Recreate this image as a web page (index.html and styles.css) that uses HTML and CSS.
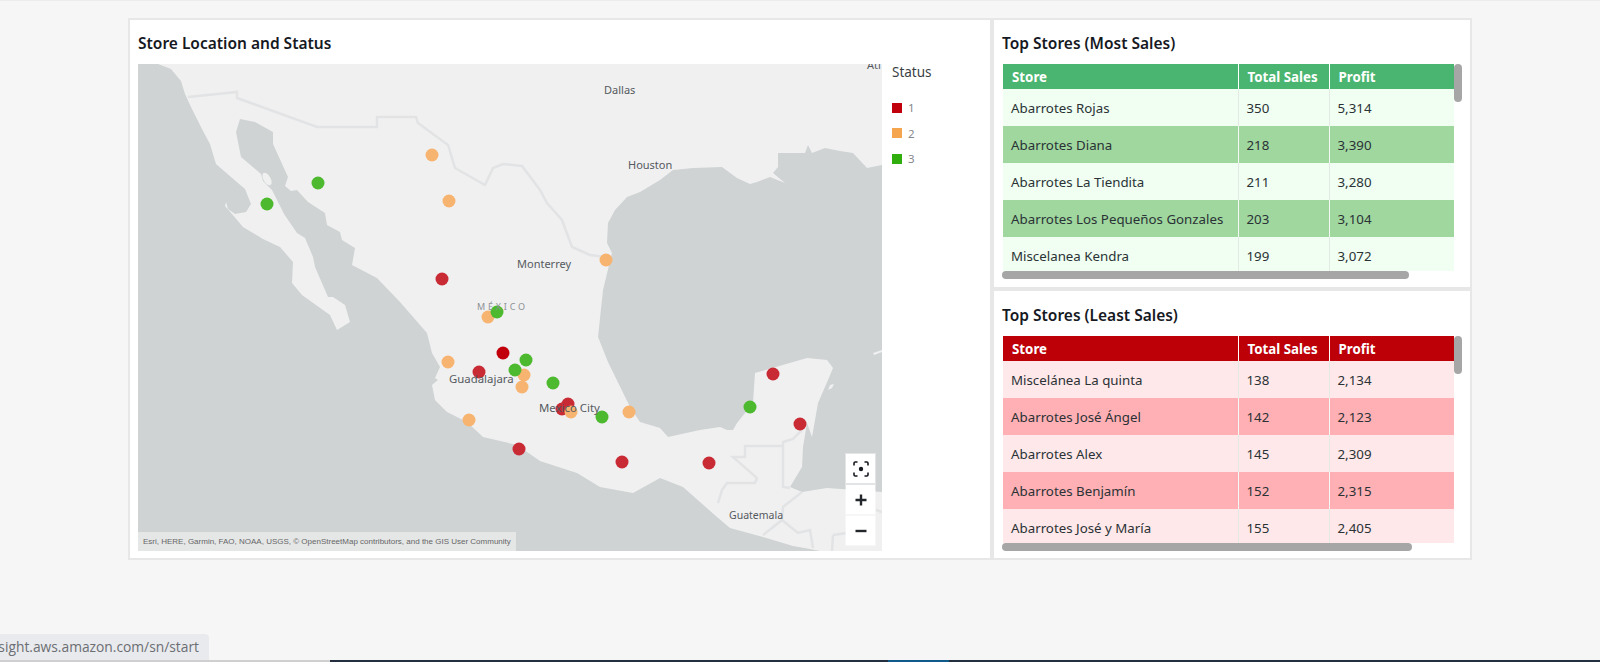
FILE: index.html
```html
<!DOCTYPE html>
<html lang="en">
<head>
  <meta charset="UTF-8" />
  <title>Store dashboard</title>
  <link rel="stylesheet" href="styles.css">
</head>
<body>
  <div class="page">
    <main class="dashboard">

      <section class="panel panel-map">
        <h2 class="panel-title">Store Location and Status</h2>
        <div class="map-row">
          <div class="map">
            <svg class="map-svg" viewBox="138 64 744 487" width="744" height="487">
              <rect class="land" x="138" y="64" width="744" height="487" />
              <path class="water" d="M138 64 L158 64 171 69 181 81 185 94 191 107 203 131 210 144 216 164 231 177 245 189 251 204 246 212 235 214 228 209 226 202 225 206 232 214 243 227 263 239 280 247 293 262 292 283 302 295 330 315 337 330 350 322 345 305 333 297 328 297 315 267 313 257 305 238 297 233 284 214 272 190 263 181 261 174 241 157 236 132 240 119 255 122 273 132 273 144 288 177 285 186 291 191 297 190 308 202 325 213 327 225 340 232 342 240 355 248 352 265 377 278 400 302 427 333 432 353 440 367 435 378 438 380 432 385 435 400 447 412 467 422 483 437 517 445 540 461 577 473 600 487 633 493 660 478 683 487 700 502 717 517 730 528 763 537 793 546 810 549 820 551 138 551 Z" />
              <path class="water" d="M882 165 L867 168 853 153 840 151 825 148 812 153 808 145 805 153 778 153 778 167 773 173 785 183 770 177 757 182 750 184 737 178 722 167 693 168 673 170 660 180 640 192 627 197 615 210 608 223 607 243 612 253 603 290 598 337 608 362 630 407 640 422 660 428 668 437 700 430 720 427 727 430 733 430 737 423 753 403 755 373 807 358 827 360 833 368 828 380 818 403 812 437 807 423 803 447 802 467 790 487 802 492 827 488 882 492 Z" />
              <path class="island" d="M828 390 L830 385 834 384 832 388 Z" />
              <path class="island" d="M873 353 L882 350 882 352 874 355 Z" />
              <ellipse class="island" cx="267" cy="179" rx="3.5" ry="7" transform="rotate(-30 267 179)" />
              <path class="border" d="M188 97 L237 92 237 98 317 127 377 127 377 117 416 117 418 123 448 145 455 168 485 185 493 168 503 164 522 166 540 190 547 203 562 220 572 247 590 255 605 257" />
              <path class="border" d="M718 503 L722 490 727 483 755 483 757 478 733 457 745 457 745 446 783 446 783 487 790 488 M783 446 L783 442 793 439 802 430 M802 492 L783 507 782 520 763 535 M782 520 L798 533 810 530 813 548 M833 535 L847 533 M833 535 L832 551 M882 512 L876 510" />

              <text class="city" x="604" y="94">Dallas</text>
              <text class="city" x="628" y="169">Houston</text>
              <text class="city" x="867" y="69">Atl</text>

              <circle class="dot orange" cx="432" cy="155" r="6.5" />
              <circle class="dot green" cx="318" cy="183" r="6.5" />
              <circle class="dot green" cx="267" cy="204" r="6.5" />
              <circle class="dot orange" cx="449" cy="201" r="6.5" />
              <circle class="dot red" cx="442" cy="279" r="6.5" />
              <circle class="dot orange" cx="606" cy="260" r="6.5" />
              <circle class="dot orange" cx="488" cy="317" r="6.5" />
              <circle class="dot green" cx="497" cy="312" r="6.5" />
              <circle class="dot darkred" cx="503" cy="353" r="6.5" />
              <circle class="dot orange" cx="524" cy="375" r="6.5" />
              <circle class="dot green" cx="526" cy="360" r="6.5" />
              <circle class="dot green" cx="515" cy="370" r="6.5" />
              <circle class="dot orange" cx="522" cy="387" r="6.5" />
              <circle class="dot red" cx="479" cy="372" r="6.5" />
              <circle class="dot orange" cx="448" cy="362" r="6.5" />
              <circle class="dot orange" cx="469" cy="420" r="6.5" />
              <circle class="dot red" cx="519" cy="449" r="6.5" />
              <circle class="dot green" cx="553" cy="383" r="6.5" />
              <circle class="dot red" cx="568" cy="404" r="6.5" />
              <circle class="dot red" cx="562" cy="409" r="6.5" />
              <circle class="dot orange" cx="571" cy="412" r="6.5" />
              <circle class="dot green" cx="602" cy="417" r="6.5" />
              <circle class="dot orange" cx="629" cy="412" r="6.5" />
              <circle class="dot red" cx="622" cy="462" r="6.5" />
              <circle class="dot red" cx="709" cy="463" r="6.5" />
              <circle class="dot red" cx="773" cy="374" r="6.5" />
              <circle class="dot green" cx="750" cy="407" r="6.5" />
              <circle class="dot red" cx="800" cy="424" r="6.5" />

              <text class="city" x="517" y="268">Monterrey</text>
              <text class="country" x="477" y="310">MÉXICO</text>
              <text class="city city-wide" x="449" y="383">Guadalajara</text>
              <text class="city city-wide" x="539" y="412">Mexico City</text>
              <text class="city city-small" x="729" y="519">Guatemala</text>
            </svg>

            <div class="map-credit">Esri, HERE, Garmin, FAO, NOAA, USGS, © OpenStreetMap contributors, and the GIS User Community</div>

            <div class="map-controls">
              <button class="map-btn" type="button" aria-label="Focus">
                <svg viewBox="0 0 16 16" width="16" height="16">
                  <circle cx="8" cy="8" r="2.2" fill="#16191f" />
                  <path d="M1 4.5V2.2Q1 1 2.2 1H4.5M11.5 1H13.8Q15 1 15 2.2V4.5M15 11.5V13.8Q15 15 13.8 15H11.5M4.5 15H2.2Q1 15 1 13.8V11.5" fill="none" stroke="#16191f" stroke-width="1.6" />
                </svg>
              </button>
              <button class="map-btn" type="button" aria-label="Zoom in">
                <svg viewBox="0 0 12 12" width="12" height="12"><path d="M6 0.5V11.5M0.5 6H11.5" stroke="#23272c" stroke-width="2.4" fill="none" /></svg>
              </button>
              <button class="map-btn" type="button" aria-label="Zoom out">
                <svg viewBox="0 0 12 12" width="12" height="12"><path d="M0.5 6H11.5" stroke="#23272c" stroke-width="2.4" fill="none" /></svg>
              </button>
            </div>
          </div>

          <aside class="legend">
            <div class="legend-title">Status</div>
            <div class="legend-item"><span class="swatch swatch-red"></span>1</div>
            <div class="legend-item"><span class="swatch swatch-orange"></span>2</div>
            <div class="legend-item"><span class="swatch swatch-green"></span>3</div>
          </aside>
        </div>
      </section>

      <section class="panel panel-table">
        <h2 class="panel-title">Top Stores (Most Sales)</h2>
        <div class="table-box">
          <div class="table-clip">
            <table class="stores stores-green">
              <thead>
                <tr><th class="col-store">Store</th><th class="col-sales">Total Sales</th><th>Profit</th></tr>
              </thead>
              <tbody>
                <tr><td>Abarrotes Rojas</td><td>350</td><td>5,314</td></tr>
                <tr><td>Abarrotes Diana</td><td>218</td><td>3,390</td></tr>
                <tr><td>Abarrotes La Tiendita</td><td>211</td><td>3,280</td></tr>
                <tr><td>Abarrotes Los Pequeños Gonzales</td><td>203</td><td>3,104</td></tr>
                <tr><td>Miscelanea Kendra</td><td>199</td><td>3,072</td></tr>
              </tbody>
            </table>
          </div>
          <div class="scroll-v"></div>
          <div class="scroll-h"></div>
        </div>
      </section>

      <section class="panel panel-table panel-low">
        <h2 class="panel-title">Top Stores (Least Sales)</h2>
        <div class="table-box">
          <div class="table-clip">
            <table class="stores stores-red">
              <thead>
                <tr><th class="col-store">Store</th><th class="col-sales">Total Sales</th><th>Profit</th></tr>
              </thead>
              <tbody>
                <tr><td>Miscelánea La quinta</td><td>138</td><td>2,134</td></tr>
                <tr><td>Abarrotes José Ángel</td><td>142</td><td>2,123</td></tr>
                <tr><td>Abarrotes Alex</td><td>145</td><td>2,309</td></tr>
                <tr><td>Abarrotes Benjamín</td><td>152</td><td>2,315</td></tr>
                <tr><td>Abarrotes José y María</td><td>155</td><td>2,405</td></tr>
              </tbody>
            </table>
          </div>
          <div class="scroll-v"></div>
          <div class="scroll-h scroll-h-long"></div>
        </div>
      </section>

    </main>

    <div class="status-link"><span>https://us-east-1.quicksight.aws.amazon.com/sn/start</span></div>

    <div class="bottom-bar">
      <div class="bar-grey"></div>
      <div class="bar-navy"></div>
      <div class="bar-blue"></div>
      <div class="bar-end"></div>
    </div>
  </div>
</body>
</html>
```

FILE: styles.css
```css
* {
  box-sizing: border-box;
}
html, body {
  margin: 0;
  height: 100%;
}
body {
  background: #f6f6f6;
  color: #16191f;
  font-family: "Noto Sans", Arial, sans-serif;
  overflow: hidden;
}
.page {
  position: relative;
  height: 662px;
  display: flex;
  flex-direction: column;
  border-top: 1px solid #ececec;
}
.dashboard {
  flex: 1;
  display: grid;
  grid-template-columns: 864px 480px;
  grid-template-rows: 271px 271px;
  align-content: start;
  padding: 17px 0 0 128px;
}
.panel {
  background: #fff;
  border: 2px solid #e7e7e7;
  padding: 0 8px;
}
.panel-map {
  grid-row: 1 / span 2;
}
.panel-low {
  padding-top: 1px;
}
.panel-title {
  margin: 0;
  height: 44px;
  line-height: 46px;
  font-size: 15.5px;
  font-weight: 600;
  color: #16191f;
}

/* map */
.map-row {
  display: flex;
}
.map {
  position: relative;
  width: 744px;
  height: 487px;
  overflow: hidden;
}
.map-svg {
  display: block;
}
.land {
  fill: #f0f0f1;
}
.water {
  fill: #cfd3d4;
}
.island {
  fill: #f0f0f1;
}
.border {
  fill: none;
  stroke: #e2e3e4;
  stroke-width: 2.5;
}
.city {
  font-family: "Noto Sans", Arial, sans-serif;
  font-size: 11px;
  fill: #555a5e;
}
.city-wide {
  font-size: 11.4px;
}
.city-small {
  font-size: 10.5px;
}
.country {
  font-family: "Noto Sans", Arial, sans-serif;
  font-size: 9px;
  letter-spacing: 2.8px;
  fill: #8d9194;
}
.dot.orange { fill: #f7b470; }
.dot.green { fill: #4db92e; }
.dot.red { fill: #c92b35; }
.dot.darkred { fill: #c2000b; }

.map-credit {
  position: absolute;
  left: 0;
  bottom: 0;
  height: 19px;
  line-height: 19px;
  padding: 0 5px;
  background: rgba(255, 255, 255, 0.45);
  color: #666;
  font-family: "Liberation Sans", Arial, sans-serif;
  font-size: 8px;
  white-space: nowrap;
}
.map-controls {
  position: absolute;
  left: 707px;
  top: 389px;
  display: flex;
  flex-direction: column;
  gap: 2px;
  padding: 1px;
  background: rgba(255, 255, 255, 0.4);
}
.map-btn {
  width: 29px;
  height: 29px;
  padding: 0;
  border: none;
  background: #fff;
  display: flex;
  align-items: center;
  justify-content: center;
}

/* legend */
.legend {
  padding-left: 10px;
}
.legend-title {
  height: 31px;
  font-size: 13.5px;
  line-height: 16px;
  color: #3a3f44;
}
.legend-item {
  display: flex;
  align-items: center;
  gap: 6px;
  height: 25.5px;
  font-size: 11.5px;
  color: #85888c;
}
.swatch {
  width: 10px;
  height: 10px;
}
.swatch-red { background: #c0000a; }
.swatch-orange { background: #f6a54f; }
.swatch-green { background: #2fae0e; }

/* tables */
.table-box {
  position: relative;
  margin-left: 1px;
  width: 459px;
  height: 215px;
}
.table-clip {
  width: 451px;
  height: 207px;
  overflow: hidden;
}
.stores {
  width: 451px;
  table-layout: fixed;
  border-collapse: collapse;
  font-size: 13.3px;
}
.stores th {
  height: 25px;
  padding: 0 9px;
  text-align: left;
  font-size: 13.3px;
  font-weight: 700;
  color: #fff;
  border-right: 1px solid #fff;
}
.stores td {
  height: 37px;
  padding: 0 8px;
  color: #2a3236;
  white-space: nowrap;
  border-right: 1px solid #e3e9e3;
}
.stores th:last-child,
.stores td:last-child {
  border-right: none;
}
.col-store { width: 235px; }
.col-sales { width: 91px; }

.stores-green thead tr { background: #4ab570; }
.stores-green tbody tr:nth-child(odd) { background: #f0fff1; }
.stores-green tbody tr:nth-child(even) { background: #a0d79e; }
.stores-red thead tr { background: #bd0008; }
.stores-red tbody tr:nth-child(odd) { background: #ffe8e9; }
.stores-red tbody tr:nth-child(even) { background: #ffb0b4; }
.stores tbody tr:nth-child(even) td { border-right-color: #f4f8f4; }

.scroll-v {
  position: absolute;
  top: 0;
  right: 0;
  width: 8px;
  height: 38px;
  border-radius: 4px;
  background: #a6a6a6;
}
.scroll-h {
  position: absolute;
  left: -1px;
  bottom: 0;
  width: 407px;
  height: 8px;
  border-radius: 4px;
  background: #a6a6a6;
}
.scroll-h-long {
  width: 410px;
}

/* browser link preview and strip along the bottom */
.status-link {
  position: absolute;
  left: 0;
  bottom: 2px;
  width: 209px;
  height: 26px;
  overflow: hidden;
  direction: rtl;
  padding-right: 10px;
  background: #e9eaed;
  border-top-right-radius: 4px;
  color: #6b6e73;
  font-family: "Open Sans", Arial, sans-serif;
  font-size: 13.8px;
  line-height: 26px;
  white-space: nowrap;
}
.status-link span {
  direction: ltr;
  unicode-bidi: embed;
}
.bottom-bar {
  height: 2px;
  display: flex;
}
.bar-grey { width: 330px; background: #cfcfcf; }
.bar-navy { width: 558px; background: #232f3e; }
.bar-blue { width: 61px; background: #0f5a8a; }
.bar-end { flex: 1; background: #232f3e; }
```
